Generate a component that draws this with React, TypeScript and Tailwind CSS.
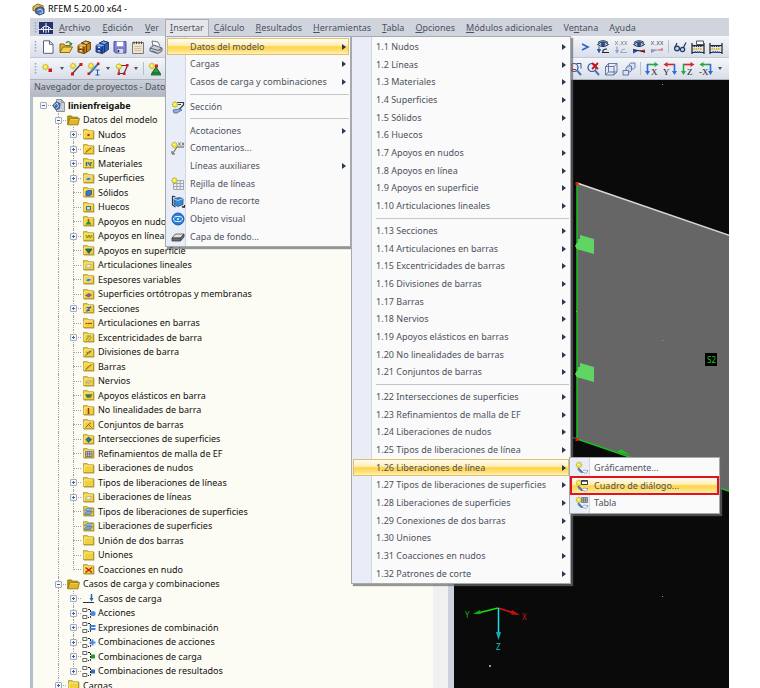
import React from 'react';
import clsx from 'clsx';

interface IconProps {
    children: React.ReactNode;
    size?: number;
    className?: string;
}

const Icon = ({ children, size = 14, className }: IconProps) => (
    <svg width={size} height={size} viewBox="0 0 14 14" fill="none" aria-hidden="true" className={clsx('shrink-0', className)}>
        {children}
    </svg>
);

/* ---------- shared pieces ---------- */

const Star = ({ x = 3.5, y = 3.5 }: { x?: number; y?: number }) => (
    <g transform={`translate(${x} ${y})`}>
        <path d="M0-3.4V3.4M-3.4 0H3.4M-2.4-2.4 2.4 2.4M2.4-2.4-2.4 2.4" stroke="#c4b435" strokeWidth=".8" />
        <circle r="2.5" fill="#f2e63c" stroke="#b5a426" strokeWidth=".6" />
        <circle cx="-.5" cy="-.5" r="1" fill="#fffbb0" />
    </g>
);

const Folder = ({ children }: { children?: React.ReactNode }) => (
    <svg width="12" height="11" viewBox="0 0 12 11" fill="none" aria-hidden="true">
        <path d="M1 2.2V1h4l1 1.2h5.4v8.3H1z" fill="#8a7326" opacity=".65" />
        <path d="M.5 2V.6h3.8l1 1.2h5.2V9.6H.5z" fill="#f0d03c" stroke="#b3931f" strokeWidth=".8" />
        <path d="M1.2 2.9h8.6M1.2 3v6" stroke="#fbf0a6" strokeWidth=".8" />
        {children}
    </svg>
);

const OpenFolder = () => (
    <svg width="13" height="11" viewBox="0 0 13 11" fill="none" aria-hidden="true">
        <path d="M.8 9.6V1h3.8l1 1.2h5.2v2" fill="#c79f14" stroke="#8a6d0c" strokeWidth=".9" />
        <path d="M.8 9.8 2.6 3.6h9.8l-1.4 6.2z" fill="#e0b823" stroke="#8a6d0c" strokeWidth=".8" />
        <path d="M3.2 4.4h8" stroke="#f6e07a" strokeWidth=".7" />
    </svg>
);

const ProjectIcon = () => (
    <svg width="13" height="13" viewBox="0 0 13 13" fill="none" aria-hidden="true">
        <path d="M4.5.5h5l3 3v9h-8z" fill="#c9ced6" stroke="#8a92a0" />
        <path d="M9.5.5v3h3" stroke="#8a92a0" />
        <path d="M.6 6.5 4 2.8l4.2 1.6-.6 5L4 11z" fill="#4a6fa8" stroke="#35507f" strokeWidth=".7" />
        <path d="M2 6.6 5 4l1.6 3.6L4 9.8" stroke="#d3e0f3" strokeWidth=".9" />
    </svg>
);

/* ---------- tree ---------- */

const glyphs: Record<string, React.ReactNode> = {
    nodes: <rect x="4.5" y="5" width="2" height="2" fill="#d01616" />,
    line: <path d="M2.5 8.5 8.5 3.5" stroke="#8a4a12" />,
    materials: <path d="M3.5 4v4M5 4.5 8 8M8 4v2" stroke="#2c6c9c" strokeWidth="1.4" />,
    surface: <path d="M2.5 7.5 4.5 4.5h4l-2 3z" fill="#3f79c4" stroke="#ffffff" strokeWidth=".5" />,
    solid: <path d="M3 4.5 5 3.5h3.5v4L6.5 8.5H3z" fill="#377ad0" stroke="#1c4585" strokeWidth=".7" />,
    hole: <path d="M3.5 4.5h4V8h-4z" fill="#e6dfa0" stroke="#3c6da8" />,
    nodeSupport: (
        <>
            <path d="m5.5 4.5 3 4h-6z" fill="#1d9440" />
            <path d="M4.7 3.2h1.600v1.600H4.700z" fill="#d01616" />
        </>
    ),
    lineSupport: <path d="M3 4l1.5 3L6 4M6 4l1.5 3L9 4" stroke="#4c8f2c" strokeWidth=".9" />,
    surfSupport: <path d="M2.5 4H9L5.8 8.5z" fill="#167a45" stroke="#234d8b" strokeWidth=".8" />,
    hinge: <path d="M2.5 7.5 5 4.5h3.5L6 7.5z" fill="#fbfbf4" stroke="#8f9bb0" strokeWidth=".6" />,
    section: <path d="M3.5 8.5 8 3.5M3.5 4.5H8M3.5 7.5H7" stroke="#2a63c9" strokeWidth="1.2" />,
    ortho: <path d="M2.5 6.5 6 4.5 8.5 6 6 8z" fill="#5171d0" stroke="#a13434" strokeWidth=".6" />,
    memberHinge: <path d="M2.5 5.5h2M5 5.5h4" stroke="#b03a1a" strokeWidth="1.2" />,
    ecc: <path d="M3 8 6 4.5M5.5 8.5 8.5 5M4 4h4" stroke="#6d8a54" strokeWidth=".9" />,
    division: <path d="M2.5 8.5 8.5 3.5M4 5l1 2M6 4l1 2" stroke="#55553c" strokeWidth=".9" />,
    rib: <path d="M2.5 6.5 5 5h3.5L6 7.5z" fill="#d8d2a4" stroke="#9a9678" strokeWidth=".6" />,
    elastic: <path d="M2.5 4.5H9L7.5 7.5H4z" fill="#179049" stroke="#8f3a2e" strokeWidth=".4" />,
    nonlinear: <path d="M5.5 3v6" stroke="#a42f1d" strokeWidth="1.5" />,
    sets: <path d="M2.5 8.5 5.5 5.5 8.5 8.5M5.5 5.5 8 3.5" stroke="#a8401e" strokeWidth=".9" />,
    intersect: <path d="M5.5 3 8.5 5.5 5.5 8.5 3 5.5z" fill="#2e6fb4" stroke="#1a365c" strokeWidth=".6" />,
    mesh: <path d="M2.5 3.5H9v5H2.5zM4.500 3.5v5M6.700 3.5v5M2.500 6H9" fill="#c0c6c8" stroke="#5f6b88" strokeWidth=".8" />,
    surfRelease: (
        <>
            <path d="M1.5 3.5 4 2.5h5.5L7.500 5h-6z" fill="#8fb6de" stroke="#5279a6" strokeWidth=".6" />
            <path d="M1.5 7 4 5.5h5.5l-2 3h-6z" fill="#78a5d4" stroke="#466d98" strokeWidth=".6" />
        </>
    ),
    constraint: <path d="M2.5 3.5 9 8.5M9 3.5 2.5 8.5" stroke="#c01919" strokeWidth="1.2" />,
};

const LoadCaseIcon = () => (
    <svg width="13" height="11" viewBox="0 0 13 11" fill="none" aria-hidden="true">
        <path d="M1 9.5h11" stroke="#333" />
        <path d="M9.5 1v5" stroke="#2e62bb" strokeWidth="1.5" />
        <path d="M7.5 5h4l-2 3.5z" fill="#2e62bb" />
    </svg>
);

const ComboIcon = ({ mark }: { mark: React.ReactNode }) => (
    <svg width="14" height="13" viewBox="0 0 14 13" fill="none" aria-hidden="true">
        <path d="M.8 1.5h4v3h-4zM.8 8.5h4v3h-4z" fill="#fff" stroke="#555" strokeWidth=".9" />
        <path d="M6 2.5h2.5v8H6" stroke="#222" strokeDasharray="2 1" />
        {mark}
    </svg>
);

interface TreeNode {
    label: string;
    level: number;
    icon: React.ReactNode;
    box?: '+' | '-';
    last?: boolean;
}

const data = (label: string, glyph?: string, box?: '+', last?: boolean): TreeNode => ({
    label,
    level: 2,
    icon: <Folder>{glyph && glyphs[glyph]}</Folder>,
    box,
    last,
});

const combo = (label: string, mark: React.ReactNode, last?: boolean): TreeNode => ({
    label,
    level: 2,
    icon: <ComboIcon mark={mark} />,
    box: '+',
    last,
});

const tree: TreeNode[] = [
    { label: 'linienfreigabe', level: 0, icon: <ProjectIcon />, box: '-' },
    { label: 'Datos del modelo', level: 1, icon: <OpenFolder />, box: '-' },
    data('Nudos', 'nodes', '+'),
    data('Líneas', 'line', '+'),
    data('Materiales', 'materials', '+'),
    data('Superficies', 'surface', '+'),
    data('Sólidos', 'solid'),
    data('Huecos', 'hole'),
    data('Apoyos en nudos', 'nodeSupport'),
    data('Apoyos en línea', 'lineSupport', '+'),
    data('Apoyos en superficie', 'surfSupport'),
    data('Articulaciones lineales', 'hinge'),
    data('Espesores variables', 'surface'),
    data('Superficies ortótropas y membranas', 'ortho'),
    data('Secciones', 'section', '+'),
    data('Articulaciones en barras', 'memberHinge'),
    data('Excentricidades de barra', 'ecc', '+'),
    data('Divisiones de barra', 'division'),
    data('Barras', 'line'),
    data('Nervios', 'rib'),
    data('Apoyos elásticos en barra', 'elastic'),
    data('No linealidades de barra', 'nonlinear'),
    data('Conjuntos de barras', 'sets'),
    data('Intersecciones de superficies', 'intersect'),
    data('Refinamientos de malla de EF', 'mesh'),
    data('Liberaciones de nudos'),
    data('Tipos de liberaciones de líneas', undefined, '+'),
    data('Liberaciones de líneas', 'hinge', '+'),
    data('Tipos de liberaciones de superficies', 'surfRelease'),
    data('Liberaciones de superficies', 'surfRelease'),
    data('Unión de dos barras'),
    data('Uniones'),
    data('Coacciones en nudo', 'constraint', undefined, true),
    { label: 'Casos de carga y combinaciones', level: 1, icon: <OpenFolder />, box: '-' },
    { label: 'Casos de carga', level: 2, icon: <LoadCaseIcon />, box: '+' },
    combo('Acciones', <circle cx="11" cy="6.5" r="2.6" fill="#4a88ec" />),
    combo('Expresiones de combinación', <path d="M7.5 5h6M7.5 8h6" stroke="#3f7fe0" strokeWidth="2" />),
    combo('Combinaciones de acciones', <path d="M10.5 3.5v6M7.5 6.5h6" stroke="#4a88ec" strokeWidth="2" />),
    combo('Combinaciones de carga', <path d="M9 4.5h4v4H9z" fill="#1f9a35" />),
    combo('Combinaciones de resultados', <path d="M9 4.5h4v4H9z" fill="#2f6dc6" />, true),
    { label: 'Cargas', level: 1, icon: <Folder />, box: '+' },
];

const TreeRow = ({ node }: { node: TreeNode }) => (
    <li className="flex items-center odd:h-[15px] even:h-[14px]">
        {Array.from({ length: node.level + 1 }, (_, i) => {
            const own = i === node.level;
            return (
                <span key={i} className="relative h-full w-[15px] shrink-0">
                    {i > 0 && (
                        <span
                            className={clsx(
                                'absolute top-0 left-[7px] border-l border-dotted border-[#a2a2a2]',
                                own && node.last ? 'h-1/2' : 'h-full',
                            )}
                        />
                    )}
                    {own && <span className="absolute top-[7px] right-0 left-[7px] border-t border-dotted border-[#a2a2a2]" />}
                    {own && node.box && (
                        <button
                            aria-label={node.box === '+' ? 'Expandir' : 'Contraer'}
                            className="absolute top-[4px] left-[4px] grid size-[7px] place-items-center rounded-[1px] border border-[#a3abb8] bg-[#f6f8fc]"
                        >
                            <svg width="5" height="5" viewBox="0 0 5 5" stroke="#3d63a8">
                                <path d={node.box === '+' ? 'M1 2.5h3M2.5 1v3' : 'M1 2.5h3'} />
                            </svg>
                        </button>
                    )}
                </span>
            );
        })}
        <span className="flex w-[15px] shrink-0 justify-center">{node.icon}</span>
        <span className={clsx('ml-[2px] whitespace-nowrap', node.level === 0 && 'font-bold')}>{node.label}</span>
    </li>
);

/* ---------- menus ---------- */

interface MenuEntry {
    label: string;
    icon?: React.ReactNode;
    arrow?: boolean;
    active?: boolean;
    marked?: boolean;
    submenu?: React.ReactNode;
}

const ReleaseBase = () => (
    <>
        <path d="M2.5 8.5 6 11.5h5l2-2.5" stroke="#7a8ba3" />
        <path d="m3 7 4 4" stroke="#2f62b5" strokeWidth="1.4" />
        <path d="m7 11 2-2 4 1-2 2.5z" fill="#f4f6fa" stroke="#8895a8" strokeWidth=".7" />
        <Star x={4} y={4} />
    </>
);

const releaseMenu: MenuEntry[] = [
    { label: 'Gráficamente...', icon: <Icon><ReleaseBase /></Icon> },
    {
        label: 'Cuadro de diálogo...',
        active: true,
        marked: true,
        icon: (
            <Icon>
                <ReleaseBase />
                <path d="M6.5 1.5h6v4h-6z" fill="#fff" stroke="#333c4d" />
                <path d="M6.5 2h6" stroke="#333c4d" strokeWidth="1.5" />
            </Icon>
        ),
    },
    {
        label: 'Tabla',
        icon: (
            <Icon>
                <ReleaseBase />
                <path d="M6.5 1.5h6v5h-6zM8.5 1.5v5M10.5 1.5v5M6.5 3.2h6M6.5 4.9h6" fill="#c9ccd2" stroke="#6a7180" strokeWidth=".8" />
            </Icon>
        ),
    },
];

const MenuItem = ({ entry }: { entry: MenuEntry }) => (
    <li className="relative h-[18px]">
        <button
            className={clsx(
                'flex size-full items-center border text-left whitespace-nowrap',
                entry.active
                    ? 'bg-[linear-gradient(to_bottom,#fffdf2_0%,#ffeeb8_42%,#ffd445_52%,#ffdf74_78%,#fff0bd_100%)]'
                    : 'border-transparent',
                entry.active && !entry.marked && 'border-[#dcc06a]',
                entry.marked && 'border-[#e3121b] outline outline-[#e3121b]',
            )}
        >
            <span className="flex w-[19px] justify-center">{entry.icon}</span>
            <span className="ml-[3px] flex-1">{entry.label}</span>
            {entry.arrow && (
                <svg width="4" height="6" viewBox="0 0 4 6" className="mr-[2px]" aria-hidden="true">
                    <path d="M0 0 4 3 0 6z" fill="#2c3850" />
                </svg>
            )}
        </button>
        {entry.submenu}
    </li>
);

const Menu = ({ sections, className, rhythm }: { sections: MenuEntry[][]; className: string; rhythm: string }) => (
    <div
        className={clsx(
            'absolute z-10 border border-[#a6a9af] bg-[linear-gradient(to_right,#e8edf7_19px,#d3d6dc_19px,#d3d6dc_20px,#fafafa_20px)] p-px text-[#4c5260] shadow-[2px_2px_1px_rgba(105,105,105,0.7)]',
            className,
        )}
    >
        {sections.map((entries, i) => (
            <React.Fragment key={i}>
                {i > 0 && <hr className="my-[3px] ml-[23px] border-[#c3c5c9]" />}
                <ul className={rhythm}>
                    {entries.map(entry => (
                        <MenuItem key={entry.label} entry={entry} />
                    ))}
                </ul>
            </React.Fragment>
        ))}
    </div>
);

const withArrow = (label: string): MenuEntry => ({ label, arrow: true });

const modelSections: MenuEntry[][] = [
    [
        '1.1 Nudos',
        '1.2 Líneas',
        '1.3 Materiales',
        '1.4 Superficies',
        '1.5 Sólidos',
        '1.6 Huecos',
        '1.7 Apoyos en nudos',
        '1.8 Apoyos en línea',
        '1.9 Apoyos en superficie',
        '1.10 Articulaciones lineales',
    ].map(withArrow),
    [
        '1.13 Secciones',
        '1.14 Articulaciones en barras',
        '1.15 Excentricidades de barras',
        '1.16 Divisiones de barras',
        '1.17 Barras',
        '1.18 Nervios',
        '1.19 Apoyos elásticos en barras',
        '1.20 No linealidades de barras',
        '1.21 Conjuntos de barras',
    ].map(withArrow),
    [
        ...['1.22 Intersecciones de superficies', '1.23 Refinamientos de malla de EF', '1.24 Liberaciones de nudos', '1.25 Tipos de liberaciones de línea'].map(withArrow),
        {
            label: '1.26 Liberaciones de línea',
            arrow: true,
            active: true,
            submenu: <Menu sections={[releaseMenu]} className="-top-[2px] left-full w-[151px]" rhythm="*:nth-[3n+2]:h-[17px]" />,
        },
        ...['1.27 Tipos de liberaciones de superficies', '1.28 Liberaciones de superficies', '1.29 Conexiones de dos barras', '1.30 Uniones', '1.31 Coacciones en nudos', '1.32 Patrones de corte'].map(withArrow),
    ],
];

const insertSections: MenuEntry[][] = [
    [
        {
            label: 'Datos del modelo',
            arrow: true,
            active: true,
            submenu: <Menu sections={modelSections} className="-top-[2px] left-full ml-[2px] w-[220px]" rhythm="*:nth-[3n+2]:h-[17px]" />,
        },
        { label: 'Cargas', arrow: true },
        { label: 'Casos de carga y combinaciones', arrow: true },
    ],
    [
        {
            label: 'Sección',
            icon: (
                <Icon>
                    <path d="M6 2.5h6.5V5L8 9.5M6 4.500h4" stroke="#353b47" strokeWidth="1.2" />
                    <path d="m2 10 6-1 3 1-5 3H3z" fill="#8fb0e0" stroke="#3e5f96" strokeWidth=".7" />
                    <Star x={4} y={4.5} />
                </Icon>
            ),
        },
    ],
    [
        { label: 'Acotaciones', arrow: true },
        {
            label: 'Comentarios...',
            icon: (
                <Icon>
                    <path d="M2 12 6 6h7" stroke="#555" />
                    <path d="M1 10v3h3" stroke="#555" />
                    <path d="m7.5 1.5 2 3M9.5 1.5l-2 3M11 1.5l2 3M13 1.5l-2 3" stroke="#555" strokeWidth=".8" />
                    <Star x={3.5} y={4} />
                </Icon>
            ),
        },
        { label: 'Líneas auxiliares', arrow: true },
        {
            label: 'Rejilla de líneas',
            icon: (
                <Icon>
                    <path d="M2.5 3.5h10v9h-10zM5.8 3v10M9.2 3v10M2 6.5h11M2 9.5h11" stroke="#a1a5ac" />
                    <Star x={3.5} y={3.5} />
                </Icon>
            ),
        },
        {
            label: 'Plano de recorte',
            icon: (
                <Icon>
                    <path d="M1.5 2v9l3 2M1.5 2l3 1" stroke="#2c3542" strokeWidth="1.2" />
                    <path d="m3 5 4.5-1.5L12 4.5v6l-5 2-4-2z" fill="#3a86cc" stroke="#1f5389" strokeWidth=".8" />
                    <path d="m3 5 4 1.5 5-2" stroke="#a9d2f5" />
                    <path d="M11 13h2.5v-2" stroke="#222" strokeWidth="1.3" />
                </Icon>
            ),
        },
        {
            label: 'Objeto visual',
            icon: (
                <Icon>
                    <circle cx="7" cy="7" r="6" fill="#2d7fd6" stroke="#125aa8" />
                    <ellipse cx="7" cy="7" rx="4.5" ry="2.6" stroke="#e6f3ff" />
                    <circle cx="7" cy="7" r="1" fill="#fff" />
                </Icon>
            ),
        },
        {
            label: 'Capa de fondo...',
            icon: (
                <Icon>
                    <path d="m1 8 3.5-4H13L9.5 8z" fill="#e3e3e3" stroke="#4a4a4a" strokeWidth=".8" />
                    <path d="M1 8v3h8.5V8zM9.5 11 13 7V4L9.5 8z" fill="#6d6d6d" stroke="#3d3d3d" strokeWidth=".8" />
                </Icon>
            ),
        },
    ],
];

const MenuTitle = ({ text, hot = 0 }: { text: string; hot?: number }) => (
    <>
        {text.slice(0, hot)}
        <u className="underline-offset-1">{text[hot]}</u>
        {text.slice(hot + 1)}
    </>
);

const MenuBar = () => (
    <nav className="flex h-[18px] shrink-0 items-center bg-[#cfd4dd] pt-px text-[#4c5260]">
        <Grip />
        <svg width="14" height="12" viewBox="0 0 14 12" aria-hidden="true">
            <rect width="14" height="12" fill="#25346e" />
            <path d="M0 7.5h14M7 1v10M1.5 7.500Q7 .5 12.500 7.5M4.500 5v5.500M9.500 5v5.500" stroke="#fff" fill="none" strokeWidth=".9" />
        </svg>
        {['Archivo', 'Edición', 'Ver'].map(text => (
            <button key={text} className="px-[6px]"><MenuTitle text={text} /></button>
        ))}
        <div className="relative self-stretch">
            <button className="flex h-[17px] items-center border border-b-0 border-[#a9adb6] bg-[#e4e6ea] px-[4px]">
                <span><MenuTitle text="Insertar" /></span>
            </button>
            <Menu sections={insertSections} className="top-full left-0 w-[186px]" rhythm="*:nth-[3n+1]:h-[17px]" />
        </div>
        {['Cálculo', 'Resultados', 'Herramientas', 'Tabla', 'Opciones', 'Módulos adicionales'].map(text => (
            <button key={text} className="pr-[6px] pl-[5px] whitespace-nowrap"><MenuTitle text={text} /></button>
        ))}
        <button className="pr-[6px] pl-[5px]"><MenuTitle text="Ventana" hot={2} /></button>
        <button className="pr-[6px] pl-[5px]"><MenuTitle text="Ayuda" hot={1} /></button>
    </nav>
);

/* ---------- toolbars ---------- */

const Grip = () => (
    <svg width="3" height="12" viewBox="0 0 3 12" className="mr-[2px] ml-[4px] shrink-0" aria-hidden="true">
        <path d="M1.5 0v12" stroke="#9ba3b2" strokeWidth="1.5" strokeDasharray="1.5 1.5" />
    </svg>
);

const Tool = ({ name, children }: { name: string; children: React.ReactNode }) => (
    <button aria-label={name} className="flex w-[18px] shrink-0 justify-center">
        <Icon>{children}</Icon>
    </button>
);

const DropArrow = ({ name }: { name: string }) => (
    <button aria-label={name} className="flex w-[10px] shrink-0 justify-center">
        <svg width="4" height="3" viewBox="0 0 4 3" aria-hidden="true"><path d="M0 0h4L2 3z" fill="#4b5260" /></svg>
    </button>
);

const Divider = () => <span className="mx-[2px] h-[13px] w-px shrink-0 bg-[#b7bdc9]" />;

/* two stacked blocks with drawer knobs */
const Cube = ({ light, mid, dark }: { light: string; mid: string; dark: string }) => (
    <>
        <path d="m4.5 3 4-2 5 1.5v7L10 12z" fill={mid} stroke={dark} strokeWidth=".8" />
        <path d="m4.5 3 4-2 5 1.5-4 2z" fill={light} stroke={dark} strokeWidth=".8" />
        <path d="m1 5.5 3-1.5 5.5 1v7.5L7 13.5 1 12z" fill={mid} stroke={dark} strokeWidth=".8" />
        <path d="m1 5.5 3-1.5 5.5 1L7 6.5z" fill={light} />
        <path d="M7 6.5v7M1 9l6 1.2" stroke={dark} />
        <path d="M3 7.3h2M3 10.8h2" stroke="#fff" />
    </>
);

const Magnifier = () => (
    <>
        <circle cx="6" cy="5.5" r="4" fill="#e5effb" stroke="#35548f" strokeWidth="1.2" />
        <path d="m9 8.5 4 4.5" stroke="#5073b5" strokeWidth="2" />
    </>
);

const Eye = () => (
    <>
        <path d="M1.5 4.5Q7-.5 12.5 4.5 7 8.5 1.5 4.5z" fill="#b9d4f2" stroke="#1b2536" />
        <circle cx="7" cy="4.2" r="2.1" fill="#1d4f9c" />
        <path d="M2 2.5Q7-1 12 2.5" stroke="#1b2536" />
    </>
);

const Digits = ({ color }: { color: string }) => (
    <path d="m1 1 3 4M4 1 1 5M5.500 5h.8M7 1l2.500 4M9.500 1 7 5M10.500 1l2.500 4M13 1l-2.500 4" stroke={color} strokeWidth=".8" />
);

const Abacus = () => (
    <>
        <path d="M1 3v11M13 3v11M1 5.500h12M1 12.500h12" stroke="#1d222b" strokeWidth="1.2" />
        <path d="M2.500 6h9" stroke="#2b2f38" strokeWidth="2.200" strokeDasharray="1.400 .8" />
        <path d="M2.500 9h9" stroke="#dfba33" strokeWidth="2.200" strokeDasharray="1.400 .8" />
        <path d="M3.500 12h7" stroke="#3763b5" strokeWidth="2.200" strokeDasharray="1.400 .8" />
    </>
);

/* axis view button: red/green/blue arms with the axis letter */
const AxisView = ({ name, letter, h, v, flip }: { name: string; letter: string; h: string; v: string; flip?: boolean }) => (
    <Tool name={name}>
        <g transform={flip ? 'translate(14 0) scale(-1 1)' : undefined}>
            <path d="M2 2.5h8" stroke={h} strokeWidth="1.6" />
            <path d="m9.500 0 4 2.500-4 2.500z" fill={h} />
            <path d="M2.500 2v8" stroke={v} strokeWidth="1.6" />
            <path d="m0 9 2.500 4L5 9z" fill={v} />
        </g>
        <text x={flip ? 0 : 6} y="13" fontSize="9" fontFamily="Liberation Serif, serif" fill="#20242c">{letter}</text>
    </Tool>
);

const FileToolbar = () => (
    <div className="flex h-[22px] shrink-0 items-center border-b border-[#c3c9d5] bg-linear-to-b from-[#f4f6fa] to-[#d9dee9]">
        <Grip />
        <Tool name="Nuevo">
            <path d="M2.500.8h6l3.500 3.500v9H2.500z" fill="#fff" stroke="#5a6474" />
            <path d="M8.500.8v3.500H12" stroke="#5a6474" />
        </Tool>
        <Tool name="Abrir">
            <path d="M1 12V4h4l1 1.500h5V8" fill="#e2b226" stroke="#8a6a12" />
            <path d="m1 12.500 3-5.500h9.500l-3 5.500z" fill="#f6d04c" stroke="#8a6a12" />
            <path d="M7 3q3-3 5 1M10.500 3.500 12 5l1-2" stroke="#2d8a35" strokeWidth="1.2" />
        </Tool>
        <Tool name="Proyectos"><Cube light="#f0c367" mid="#c98418" dark="#4f3206" /></Tool>
        <Tool name="Bloques"><Cube light="#85aef0" mid="#2f5cb4" dark="#142c5e" /></Tool>
        <Tool name="Guardar">
            <path d="M1 1.500h12v11.500H2.500L1 11.500z" fill="#7e7fd0" stroke="#55569c" />
            <path d="M3.500 1.500h7v5h-7z" fill="#fff" stroke="#9394c9" strokeWidth=".6" />
            <path d="M4.500 9H10v4H4.500z" fill="#d5d8e8" />
            <path d="M5.500 10v2.500" stroke="#26275c" strokeWidth="1.5" />
        </Tool>
        <Tool name="Informe">
            <path d="M1.500 2.500h11v11h-11z" fill="#efe3d2" stroke="#857a6a" />
            <path d="M3 1.500V4M5.500 1.500V4M8 1.500V4M10.500 1.500V4" stroke="#413b33" />
            <path d="M3.500 6.500h7M3.500 8.500h7M3.500 10.500h7" stroke="#c6b8a2" strokeWidth=".8" />
        </Tool>
        <Tool name="Imprimir">
            <path d="m4 6-1-5 6 1 2 4" fill="#fff" stroke="#6c7484" />
            <path d="m1 8 4-3 8 3v3l-4 2.500L1 11z" fill="#c6cbd6" stroke="#5b6372" />
            <path d="m1 8 8 2.500L13 8M3 11l5 2" stroke="#5b6372" />
            <circle cx="11" cy="10" r=".8" fill="#c9352b" />
        </Tool>
        <span className="flex-1" />
        <Tool name="Siguiente"><path d="m4 4 6 3-6 3" stroke="#2a63c9" strokeWidth="1.6" /></Tool>
        <Tool name="Ver cargas">
            <Eye />
            <path d="M6 12.500h7M11 9q-5 0-4 3.500" stroke="#1b2536" strokeWidth="1.2" />
            <path d="M3 6.500V11M1.500 9.500 3 12.500l1.500-3z" stroke="#2b55a8" fill="#2b55a8" />
        </Tool>
        <Tool name="Valores de carga">
            <Digits color="#8d8f96" />
            <path d="M3 6.500V12M1.500 10 3 12.500 4.500 10" stroke="#8aa0c8" strokeWidth="1.2" />
            <path d="M6 12.500h7M11 9q-4 0-4 3" stroke="#a5abb8" />
        </Tool>
        <Tool name="Ver resultados">
            <Eye />
            <path d="M1 9.500v4l6-3z" fill="#2b45c4" />
            <path d="M7 10.500 13 13V9.500z" fill="#d6242a" />
            <path d="M1 9.500 13 12" stroke="#1b2536" />
        </Tool>
        <Tool name="Valores de resultados">
            <Digits color="#6d6f77" />
            <path d="M1 9v4l6-3z" fill="#8390d8" />
            <path d="M7 10 13 8v3z" fill="#dd8084" />
            <path d="M1 10h12" stroke="#b99" />
        </Tool>
        <Divider />
        <Tool name="Gafas">
            <circle cx="4" cy="8.5" r="2.4" fill="#bcd3ee" stroke="#23375f" strokeWidth="1.2" />
            <circle cx="9.5" cy="9.5" r="2.2" fill="#bcd3ee" stroke="#23375f" strokeWidth="1.2" />
            <path d="M2 7.500 4 3M10.500 7.500 13 2.500M6.300 9h1" stroke="#23375f" strokeWidth="1.2" />
        </Tool>
        <Tool name="Calcular todo">
            <Abacus />
            <path d="M5.500 1h7v3.500h-7z" fill="#fff" stroke="#4d5462" />
        </Tool>
        <Tool name="Calcular"><Abacus /></Tool>
        <span className="w-[4px]" />
    </div>
);

const InsertToolbar = () => (
    <div className="flex h-[22px] shrink-0 items-center border-b border-[#aab1bf] bg-linear-to-b from-[#f4f6fa] to-[#d9dee9]">
        <Grip />
        <Tool name="Nudo">
            <path d="M7.500 6.500H11V10H7.500z" fill="#d8161c" />
            <Star x={4.5} y={5} />
        </Tool>
        <DropArrow name="Opciones de nudo" />
        <Tool name="Línea">
            <path d="M3 12 12 2" stroke="#3c4350" strokeWidth="1.2" />
            <path d="M2 10.500h3v3H2zM10.500 1h3v3h-3z" fill="#d8161c" />
            <Star x={4} y={4} />
        </Tool>
        <Tool name="Barra">
            <path d="M2 12 11 2" stroke="#3f76b4" strokeWidth="2" />
            <path d="M.5 10.500H3V13H.5zM10 .5h2.500V3H10z" fill="#d8161c" />
            <path d="M8.500 8h4M10.500 8v5M8.500 13h4" stroke="#2a57ae" />
            <Star x={4} y={4} />
        </Tool>
        <DropArrow name="Opciones de barra" />
        <Tool name="Superficie">
            <path d="M5 3.500h7.500L9 11.500H4V5" stroke="#6d2631" strokeWidth="1.2" />
            <path d="M11 2h2.500v2.500H11zM8 10.500h2.500V13H8zM2.500 10.500H5V13H2.500z" fill="#d8161c" />
            <Star x={4} y={4.5} />
        </Tool>
        <DropArrow name="Opciones de superficie" />
        <Divider />
        <Tool name="Apoyo">
            <path d="m8 5 4 6H4z" fill="#2f9a46" stroke="#14602a" />
            <path d="M3 11h10v2.500H3z" fill="#1f7d38" />
            <path d="M7 2.500h3v3H7z" fill="#d8161c" />
            <Star x={4} y={4} />
        </Tool>
        <span className="flex-1" />
        <Tool name="Zoom ventana">
            <Magnifier />
            <path d="M4 3.500v4h4" stroke="#d8161c" />
            <path d="M8.500 1.500H13v5" stroke="#35548f" />
        </Tool>
        <Tool name="Zoom todo">
            <Magnifier />
            <path d="m6 1 6 6M12 1 6 7" stroke="#c5161c" strokeWidth="1.8" />
        </Tool>
        <Tool name="Modelo de alambre">
            <path d="M1.500 4.500H10V13H1.500zM4.500 1.500H13V10L10 13M1.500 4.500l3-3M10 4.500l3-3M4.500 1.500V10H13M1.500 13l3-3" stroke="#5a6da0" strokeWidth=".9" />
        </Tool>
        <Tool name="Vistas apiladas">
            <path d="M7 3.500 8.500 1H13v4.500L11.500 7H7z" fill="#dbe4f3" stroke="#5a6da0" strokeWidth=".9" />
            <path d="M4 6.500 5.500 4h4v4.500L8 10H4z" fill="#cbd8ee" stroke="#5a6da0" strokeWidth=".9" />
            <path d="M1 8.500h5.500V13H1z" fill="#dbe4f3" stroke="#5a6da0" strokeWidth=".9" />
        </Tool>
        <Divider />
        <AxisView name="Vista X" letter="X" h="#28a745" v="#3469d8" />
        <AxisView name="Vista Y" letter="Y" h="#d8242a" v="#3469d8" flip />
        <AxisView name="Vista Z" letter="Z" h="#d8242a" v="#28a745" />
        <AxisView name="Vista -X" letter="-X" h="#28a745" v="#3469d8" flip />
        <DropArrow name="Más vistas" />
        <span className="w-[4px]" />
    </div>
);

/* ---------- model view ---------- */

const supportPath = 'M-1 10q1-3 3-3.500V3h2V-1L18 3V18L4 14H3q-3-1-4-4z';

const ModelView = () => (
    <main className="min-w-0 flex-1 overflow-hidden bg-[#0a0a0a]">
        <svg className="block size-full" fill="none" role="img" aria-label="Modelo">
            {/* S2 surface */}
            <path d="M123 103 423 206V462L123 359z" fill="#666" />
            <path d="M123 103 423 206" stroke="#d8d8d8" strokeWidth="1.5" />
            <path d="M123 103V359L423 462" stroke="#17c41c" strokeWidth="1.5" />
            <path d="m163 372 4-3 9 6z" fill="#17c41c" />
            <path d="M118 358h4" stroke="#2b7f8d" />
            <path d="M121.500 102h3v3h-3zM121.500 358h3v3h-3z" fill="#f01010" />
            <path d={supportPath} transform="translate(122 156)" fill="#5fd663" />
            <path d={supportPath} transform="translate(122 284)" fill="#5fd663" />
            <path d="M208 260h1v1h-1zM208 4h1v1h-1zM208 516h1v1h-1zM35 585h2v2h-2zM122 231h1v1h-1z" fill="#9a9a9a" />
            <rect x="251" y="273" width="12" height="13" fill="#000" />
            <text x="253" y="283" fontSize="8" fill="#19d31e">S2</text>

            {/* axis cross */}
            <path d="M44 528 22 533.500" stroke="#12e012" strokeWidth="1.5" />
            <path d="m19 534 7-4 1 4z" fill="#12b012" />
            <path d="m44 528 16 5" stroke="#e81010" strokeWidth="1.5" />
            <path d="m66 535-8-5-1 4.500z" fill="#c01010" />
            <path d="M44.500 528v24" stroke="#16e3e6" strokeWidth="1.5" />
            <path d="M42 552h5l-2.500 8z" fill="#16aeb2" />
            <text x="11" y="538" fontSize="8" fill="#16b516">Y</text>
            <text x="68" y="540" fontSize="8" fill="#c01818">X</text>
            <text x="42" y="570" fontSize="8" fill="#16c4c8">Z</text>
        </svg>
    </main>
);

export default function App() {
    return (
        <div className="h-screen overflow-hidden bg-white pr-[31px] pl-[30px] font-['Noto_Sans',sans-serif] text-[9px] leading-[14px]">
            <div className="flex h-full flex-col">
                <header className="flex h-[18px] shrink-0 items-center pl-[2px] text-black">
                    <Icon size={13}>
                        <path d="m1 4 5-3 6 2v5l-5 2-6-2z" fill="#e1b93a" stroke="#5d5025" strokeWidth=".8" />
                        <path d="m4 6 5-2 4 2v5l-5 2-4-2z" fill="#4871b8" stroke="#1f355e" strokeWidth=".8" />
                        <path d="M6 8q3-3 5 0t-3 3" stroke="#dbe7fa" />
                    </Icon>
                    <span className="ml-[3px]">RFEM 5.20.00 x64 -</span>
                </header>
                <MenuBar />
                <FileToolbar />
                <InsertToolbar />
                <div className="flex min-h-0 flex-1">
                    <aside className="flex w-[424px] flex-col border-r-[6px] border-[#ccd2de]">
                        <h2 className="h-[16px] shrink-0 bg-linear-to-b from-[#c9ced7] to-[#b3b8c2] pl-[4px] text-[#4c5260]">
                            Navegador de proyectos - Datos
                        </h2>
                        <div className="flex min-h-0 flex-1 border-t border-l-[3px] border-[#b5bece]">
                            <ul className="min-w-0 flex-1 overflow-hidden bg-[#fcfcf4] pt-px pl-[3px] text-[#111]">
                                {tree.map((node, i) => (
                                    <TreeRow key={i} node={node} />
                                ))}
                            </ul>
                            <div className="w-[15px] bg-[#f0f0f0]" />
                        </div>
                    </aside>
                    <ModelView />
                </div>
            </div>
        </div>
    );
}
